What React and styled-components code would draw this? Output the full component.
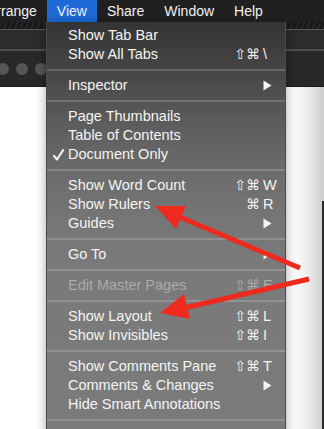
import styled, { createGlobalStyle } from 'styled-components';

const GlobalStyle = createGlobalStyle`
  html, body {
    margin: 0;
    padding: 0;
    background: #ffffff;
    overflow: hidden;
  }
  * {
    box-sizing: border-box;
  }
`;

const menuBarItems = ['Arrange', 'View', 'Share', 'Window', 'Help'];

const viewMenu = [
  { label: 'Show Tab Bar' },
  { label: 'Show All Tabs', mods: '⇧⌘', keyName: '\\' },
  { sep: true },
  { label: 'Inspector', submenu: true },
  { sep: true },
  { label: 'Page Thumbnails' },
  { label: 'Table of Contents' },
  { label: 'Document Only', checked: true },
  { sep: true },
  { label: 'Show Word Count', mods: '⇧⌘', keyName: 'W' },
  { label: 'Show Rulers', mods: '⌘', keyName: 'R' },
  { label: 'Guides', submenu: true },
  { sep: true },
  { label: 'Go To', submenu: true },
  { sep: true },
  { label: 'Edit Master Pages', mods: '⇧⌘', keyName: 'E', disabled: true },
  { sep: true },
  { label: 'Show Layout', mods: '⇧⌘', keyName: 'L' },
  { label: 'Show Invisibles', mods: '⇧⌘', keyName: 'I' },
  { sep: true },
  { label: 'Show Comments Pane', mods: '⇧⌘', keyName: 'T' },
  { label: 'Comments & Changes', submenu: true },
  { label: 'Hide Smart Annotations' },
  { sep: true },
];

const App = () => {
  return (
    <>
      <GlobalStyle />
      <Screen>
        <MenuBar>
          {menuBarItems.map((name) => (
            <BarItem key={name} $active={name === 'View'}>
              {name}
            </BarItem>
          ))}
        </MenuBar>

        <Wallpaper />
        <TabStrip />
        <Toolbar>
          <Light />
          <Light />
          <Light />
        </Toolbar>
        <Document>
          <OtherWindow />
        </Document>

        <Dropdown>
          {viewMenu.map((item, i) =>
            item.sep ? (
              <Separator key={i} />
            ) : (
              <Item key={i} $disabled={item.disabled}>
                <Check>
                  {item.checked && (
                    <svg width="11" height="12" viewBox="0 0 11 12">
                      <path
                        d="M1 6.8 L4 10.5 L10 1.2"
                        fill="none"
                        stroke="#f4f4f4"
                        strokeWidth="2.1"
                        strokeLinecap="round"
                        strokeLinejoin="round"
                      />
                    </svg>
                  )}
                </Check>
                <Label>{item.label}</Label>
                <Mods>{item.mods}</Mods>
                <KeyCol>
                  {item.submenu ? (
                    <svg width="9" height="11" viewBox="0 0 9 11">
                      <path d="M0.5 0.5 L8.5 5.5 L0.5 10.5 Z" fill="#f4f4f4" />
                    </svg>
                  ) : (
                    item.keyName
                  )}
                </KeyCol>
              </Item>
            )
          )}
        </Dropdown>

        <Arrows width="324" height="429" viewBox="0 0 324 429">
          <line x1="300" y1="268" x2="175" y2="215" stroke="#ee2a1f" strokeWidth="5" />
          <polygon points="155,206 186,206 176,229" fill="#ee2a1f" />
          <line x1="309" y1="279" x2="180" y2="309" stroke="#ee2a1f" strokeWidth="5" />
          <polygon points="160,313 184,294 190,319" fill="#ee2a1f" />
        </Arrows>
      </Screen>
    </>
  );
};

const Screen = styled.div`
  position: relative;
  width: 324px;
  height: 429px;
  overflow: hidden;
  display: flex;
  flex-direction: column;
  background: #ffffff;
  font-family: 'Liberation Sans', 'DejaVu Sans', Arial, sans-serif;
`;

const MenuBar = styled.div`
  height: 22px;
  flex: none;
  display: flex;
  align-items: stretch;
  margin-left: -23px;
  background: #202020;
`;

const BarItem = styled.div`
  padding: 0 10px;
  display: flex;
  align-items: center;
  font-size: 14px;
  color: #f2f2f2;
  background: ${(p) => (p.$active ? '#1d69d5' : 'transparent')};
`;

const Wallpaper = styled.div`
  height: 8px;
  flex: none;
  background-color: #171b1e;
  background-image: repeating-linear-gradient(
      115deg,
      rgba(255, 255, 255, 0.06) 0 2px,
      transparent 2px 5px
    ),
    repeating-linear-gradient(
      35deg,
      rgba(0, 0, 0, 0.25) 0 1px,
      transparent 1px 4px
    );
  border-bottom: 1px solid #5a5a5a;
`;

const TabStrip = styled.div`
  height: 21px;
  flex: none;
  background: #2c2c2c;
  border-bottom: 2px solid #4f4f4f;
`;

const Toolbar = styled.div`
  height: 36px;
  flex: none;
  display: flex;
  align-items: center;
  gap: 7px;
  margin-left: -3px;
  background: #282828;
  border-bottom: 1px solid #1a1a1a;
`;

const Light = styled.div`
  width: 12px;
  height: 12px;
  border-radius: 50%;
  background: #555555;
`;

const Document = styled.div`
  flex: 1;
  display: flex;
  justify-content: flex-end;
  background: linear-gradient(
    to right,
    #ffffff 0,
    #ffffff 288px,
    #f6f6f6 300px,
    #e6e6e6 312px,
    #cfcfcf 322px
  );
`;

const OtherWindow = styled.div`
  width: 2px;
  margin-top: 114px;
  background: #2a2a2a;
`;

const Dropdown = styled.div`
  position: absolute;
  top: 22px;
  left: 46px;
  width: 240px;
  bottom: -40px;
  padding-top: 4px;
  background: linear-gradient(
    to bottom,
    #343434 0,
    #464646 50px,
    #5c5c5c 100px,
    #6c6c6c 150px,
    #767676 200px,
    #7a7a7a 250px,
    #7b7b7b 100%
  );
  border-left: 1px solid #4a4a4a;
  border-right: 1px solid #4a4a4a;
  box-shadow: 0 2px 10px rgba(0, 0, 0, 0.35);
`;

const Item = styled.div`
  height: 19px;
  display: grid;
  grid-template-columns: 21px 1fr auto 18px;
  align-items: center;
  padding-right: 6px;
  font-size: 14.5px;
  line-height: 19px;
  color: ${(p) => (p.$disabled ? 'rgba(255, 255, 255, 0.38)' : '#f4f4f4')};
  white-space: nowrap;
`;

const Check = styled.span`
  display: flex;
  justify-content: flex-end;
  padding-right: 4px;
  padding-top: 1px;
`;

const Label = styled.span``;

const Mods = styled.span`
  text-align: right;
  padding-right: 1px;
  font-family: 'DejaVu Sans', 'Liberation Sans', sans-serif;
  font-size: 14px;
`;

const KeyCol = styled.span`
  display: flex;
  align-items: center;
  padding-left: 2px;
`;

const Separator = styled.div`
  height: 12px;
  display: flex;
  align-items: center;

  &::before {
    content: '';
    flex: 1;
    height: 2px;
    background: rgba(255, 255, 255, 0.18);
  }
`;

const Arrows = styled.svg`
  position: absolute;
  top: 0;
  left: 0;
  pointer-events: none;
`;

export default App;
